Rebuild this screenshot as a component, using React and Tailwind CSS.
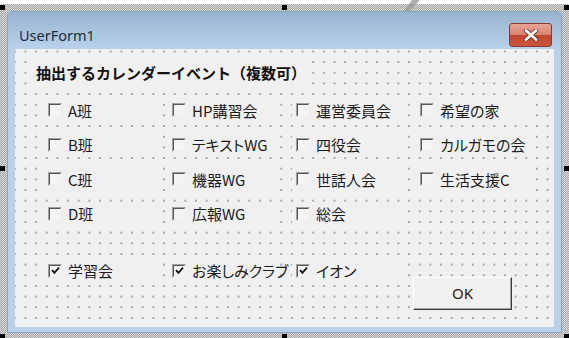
import React from 'react'

const rows = [
    ['A班', 'HP講習会', '運営委員会', '希望の家'],
    ['B班', 'テキストWG', '四役会', 'カルガモの会'],
    ['C班', '機器WG', '世話人会', '生活支援C'],
    ['D班', '広報WG', '総会', null],
]

const handles = [
    'left-0 top-[5px]', 'left-[282px] top-[5px]', 'left-[564px] top-[5px]',
    'left-0 top-[166px]', 'left-[564px] top-[166px]',
    'left-0 top-[334px]', 'left-[282px] top-[334px]', 'left-[564px] top-[334px]',
]

function Check({ label, checked }) {
    return (
        <div className="flex h-[24px] w-[112px] items-center bg-[#f0f0f0] pl-[4px]">
            <span className="flex h-[14px] w-[14px] shrink-0 border border-t-[#a0a0a0] border-l-[#a0a0a0] border-r-[#f0f0f0] border-b-[#f0f0f0]">
                <span className="flex h-full w-full items-center justify-center border border-t-[#555] border-l-[#555] border-r-[#f0f0f0] border-b-[#f0f0f0] bg-[#f4f4f4]">
                    {checked && (
                        <svg width="9" height="9" viewBox="0 0 9 9">
                            <path d="M1 4.2 L3.4 6.8 L8 1.6" fill="none" stroke="#111" strokeWidth="1.8" />
                        </svg>
                    )}
                </span>
            </span>
            <span className="ml-[6px] whitespace-nowrap text-[15px] leading-none text-[#1c1c1c] [font-feature-settings:'palt']">{label}</span>
        </div>
    )
}

export default function App() {
    return (
        <div className="relative h-[338px] w-[569px] overflow-hidden bg-white pt-[4px] font-['Noto_Sans_CJK_JP',sans-serif]">
            <div className="h-[334px] bg-[repeating-conic-gradient(#a3a3a3_0%_25%,#dcdcdc_0%_50%)] bg-[length:2px_2px] pl-[7px] pr-[7px] pt-[7px]">
                <div className="flex h-[322px] w-[555px] flex-col rounded-t-[5px] border border-[#8aa3bd] bg-[#b9d1ea]">
                    {/* title bar */}
                    <div className="flex h-[37px] shrink-0 items-center justify-between rounded-t-[4px] bg-[linear-gradient(#99b4d1,#b9d1ea)] pl-[11px] pr-[9px] pt-[9px]">
                        <span className="font-['Noto_Sans',sans-serif] text-[14.5px] leading-none text-[#1e2d3d]">UserForm1</span>
                        <div className="flex h-[24px] w-[43px] items-center justify-center rounded-[3px] border border-[#8a3b2e] bg-[linear-gradient(#e8a494_0%,#d9826f_48%,#c34630_52%,#c8553c_100%)]">
                            <svg width="16" height="12" viewBox="0 0 16 12">
                                <path d="M3 1.5 L13 10.5 M13 1.5 L3 10.5" stroke="#6e2c22" strokeWidth="4.4" strokeLinecap="round" />
                                <path d="M3 1.5 L13 10.5 M13 1.5 L3 10.5" stroke="#fff" strokeWidth="2.8" strokeLinecap="round" />
                            </svg>
                        </div>
                    </div>
                    {/* client area */}
                    <div className="flex flex-1 px-[7px] pb-[5px]">
                        <div className="flex h-[278px] w-[539px] flex-col bg-[#f0f0f0] bg-[radial-gradient(circle_at_1px_1px,#a4a4a4_0.7px,transparent_1px)] bg-[length:10.67px_10.67px] bg-[position:9.5px_1.5px]">
                            <div className="ml-[17px] mt-[10px] flex h-[26px] w-fit items-center bg-[#f0f0f0] px-[4px]">
                                <span className="text-[15px] font-bold leading-none text-[#111]">抽出するカレンダーイベント（複数可）</span>
                            </div>
                            <div className="ml-[29px] mt-[13px] grid grid-cols-[repeat(4,124px)] gap-y-[10.5px]">
                                {rows.flat().map((label, i) => (
                                    <div key={i}>{label && <Check label={label} />}</div>
                                ))}
                            </div>
                            <div className="ml-[29px] mt-[33px] flex items-start">
                                <div className="w-[124px]"><Check label="学習会" checked /></div>
                                <div className="w-[124px]"><Check label="お楽しみクラブ" checked /></div>
                                <div className="w-[124px]"><Check label="イオン" checked /></div>
                                <button className="ml-[-3px] mt-[18px] flex h-[33px] w-[99px] items-center justify-center border border-t-white border-l-white border-r-[#3d3d3d] border-b-[#3d3d3d] bg-[#f0f0f0] shadow-[inset_-1px_-1px_0_#a0a0a0] font-['Noto_Sans',sans-serif] text-[15px] leading-none text-[#222]">
                                    OK
                                </button>
                            </div>
                        </div>
                    </div>
                </div>
            </div>
            {handles.map((h, i) => (
                <span key={i} className={`absolute h-[5px] w-[5px] bg-black ${h}`} />
            ))}
            <svg className="absolute left-[396px] top-0" width="26" height="11" viewBox="0 0 26 11">
                <path d="M8 11 L16 0 L24 0 L14 11 Z" fill="#9a9a9a" opacity="0.8" />
            </svg>
        </div>
    )
}
